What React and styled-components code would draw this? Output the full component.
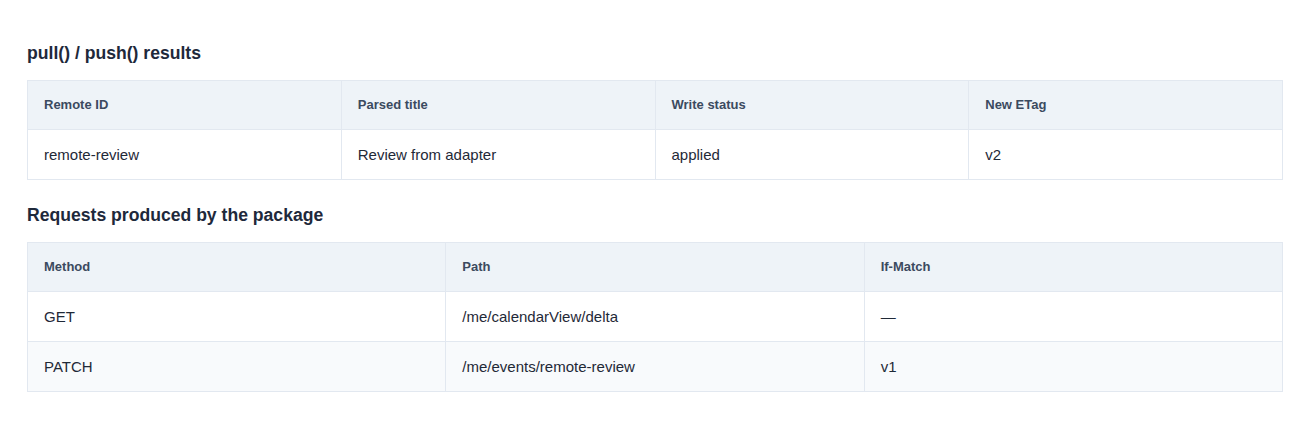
import styled, { createGlobalStyle } from "styled-components";

const GlobalStyle = createGlobalStyle`
  body {
    margin: 0;
    background: #ffffff;
    font-family: "Liberation Sans", Arial, sans-serif;
  }
`;

const Page = styled.div`
  padding: 43px 28px 40px 27px;
`;

const Section = styled.section`
  & + & {
    margin-top: 25px;
  }
`;

const Title = styled.h2`
  margin: 0 0 17px;
  font-size: 17.6px;
  line-height: 20px;
  font-weight: 700;
  color: #1e293b;
`;

const Table = styled.table`
  width: 100%;
  border-collapse: collapse;
  table-layout: fixed;
  border: 1px solid #e2e8f0;
`;

const Th = styled.th`
  text-align: left;
  padding: 15px 16px;
  line-height: 18px;
  font-size: 13px;
  font-weight: 700;
  color: #3b4a5f;
  background: #eef3f8;
  border: 1px solid #e2e8f0;
`;

const Row = styled.tr`
  background: ${(p) => (p.$striped ? "#f8fafc" : "#ffffff")};
`;

const Td = styled.td`
  padding: 15px 16px;
  line-height: 19px;
  font-size: 15px;
  color: #1f2937;
  border: 1px solid #e2e8f0;
`;

const DataTable = ({ columns, rows }) => (
  <Table>
    <thead>
      <tr>
        {columns.map((c) => (
          <Th key={c}>{c}</Th>
        ))}
      </tr>
    </thead>
    <tbody>
      {rows.map((r, i) => (
        <Row key={i} $striped={i % 2 === 1}>
          {r.map((v, j) => (
            <Td key={j}>{v}</Td>
          ))}
        </Row>
      ))}
    </tbody>
  </Table>
);

export default function App() {
  return (
    <>
      <GlobalStyle />
      <Page>
        <Section>
          <Title>pull() / push() results</Title>
          <DataTable
            columns={["Remote ID", "Parsed title", "Write status", "New ETag"]}
            rows={[["remote-review", "Review from adapter", "applied", "v2"]]}
          />
        </Section>
        <Section>
          <Title>Requests produced by the package</Title>
          <DataTable
            columns={["Method", "Path", "If-Match"]}
            rows={[
              ["GET", "/me/calendarView/delta", "—"],
              ["PATCH", "/me/events/remote-review", "v1"],
            ]}
          />
        </Section>
      </Page>
    </>
  );
}
